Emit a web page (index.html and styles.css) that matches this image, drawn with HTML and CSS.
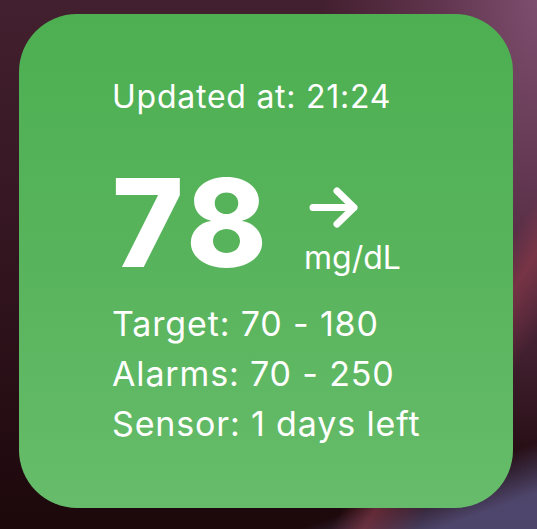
FILE: index.html
```html
<!DOCTYPE html>
<html>
<head>
<meta charset="utf-8">
<link rel="stylesheet" href="styles.css">
</head>
<body>
<div class="wallpaper">
  <div class="widget">
    <div class="updated">Updated at: 21:24</div>
    <div class="reading">
      <div class="value">78</div>
      <div class="trend">
        <svg class="arrow" width="50" height="41" viewBox="0 0 50 41">
          <path d="M4 20.5 H45 M28 4 L45 20.5 L28 37" fill="none" stroke="#fff" stroke-width="7" stroke-linecap="round" stroke-linejoin="round"/>
        </svg>
        <div class="unit">mg/dL</div>
      </div>
    </div>
    <div class="details">
      <div class="line">Target: 70 - 180</div>
      <div class="line">Alarms: 70 - 250</div>
      <div class="line">Sensor: 1 days left</div>
    </div>
  </div>
</div>
</body>
</html>
```
FILE: styles.css
```css
html, body {
  margin: 0;
  padding: 0;
}
body {
  width: 537px;
  height: 529px;
  overflow: hidden;
}
.wallpaper {
  width: 537px;
  height: 529px;
  padding: 14px 0 0 19px;
  box-sizing: border-box;
  background:
    linear-gradient(122deg, rgba(0,0,0,0) 76%, rgba(150,60,75,0.55) 80%, rgba(0,0,0,0) 86%),
    linear-gradient(160deg, rgba(0,0,0,0) 88%, rgba(110,110,170,0.6) 95%),
    radial-gradient(ellipse 40% 90% at 100% 0%, rgba(125,78,110,1) 0%, rgba(110,62,92,0.7) 45%, rgba(110,62,92,0) 100%),
    linear-gradient(180deg, #43202f 0%, #32141f 50%, #1c080b 100%);
}
.widget {
  width: 494px;
  height: 494px;
  border-radius: 58px;
  background: linear-gradient(180deg, #4daf51 0%, #58b45c 50%, #66bc6a 100%);
  box-sizing: border-box;
  padding: 65px 0 0 93px;
  color: #fff;
  font-family: "Inter", "Noto Sans", sans-serif;
}
.updated {
  font-size: 32px;
  line-height: 36px;
  letter-spacing: 0.75px;
}
.reading {
  display: flex;
  align-items: flex-end;
  margin-top: 47px;
  height: 122px;
}
.value {
  font-size: 122px;
  line-height: 122px;
  font-weight: 800;
  letter-spacing: 4px;
}
.trend {
  display: flex;
  flex-direction: column;
  margin-left: 33px;
  margin-bottom: 11px;
}
.arrow {
  display: block;
  margin-left: 5px;
}
.unit {
  margin-top: 15px;
  font-size: 32px;
  line-height: 30px;
}
.details {
  margin-top: 15px;
  font-size: 34px;
  line-height: 50px;
  letter-spacing: 0.85px;
}
```
